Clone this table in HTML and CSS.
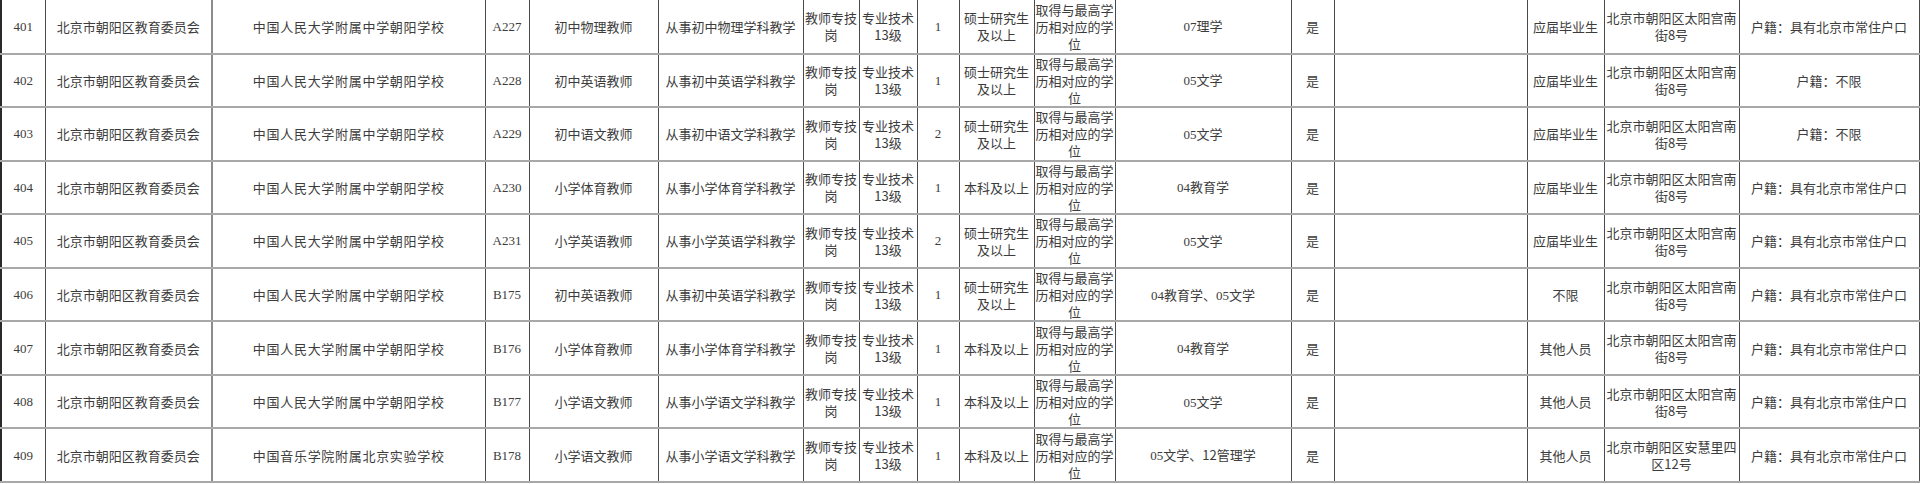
FILE: index.html
```html
<!DOCTYPE html>
<html lang="zh-CN">
<head>
<meta charset="utf-8">
<title>岗位表</title>
<link rel="stylesheet" href="styles.css">
</head>
<body>
<table class="jobs">
<colgroup>
<col class="c1"><col class="c2"><col class="c3"><col class="c4"><col class="c5"><col class="c6"><col class="c7"><col class="c8"><col class="c9"><col class="c10"><col class="c11"><col class="c12"><col class="c13"><col class="c14"><col class="c15"><col class="c16"><col class="c17">
</colgroup>
<tbody>
<tr><td class="num">401</td><td>北京市朝阳区教育委员会</td><td class="school">中国人民大学附属中学朝阳学校</td><td class="num">A227</td><td>初中物理教师</td><td>从事初中物理学科教学</td><td>教师专技岗</td><td>专业技术13级</td><td class="num">1</td><td>硕士研究生及以上</td><td>取得与最高学历相对应的学位</td><td><span class="num">07</span>理学</td><td>是</td><td></td><td>应届毕业生</td><td>北京市朝阳区太阳宫南街8号</td><td>户籍：具有北京市常住户口</td></tr>
<tr><td class="num">402</td><td>北京市朝阳区教育委员会</td><td class="school">中国人民大学附属中学朝阳学校</td><td class="num">A228</td><td>初中英语教师</td><td>从事初中英语学科教学</td><td>教师专技岗</td><td>专业技术13级</td><td class="num">1</td><td>硕士研究生及以上</td><td>取得与最高学历相对应的学位</td><td><span class="num">05</span>文学</td><td>是</td><td></td><td>应届毕业生</td><td>北京市朝阳区太阳宫南街8号</td><td>户籍：不限</td></tr>
<tr><td class="num">403</td><td>北京市朝阳区教育委员会</td><td class="school">中国人民大学附属中学朝阳学校</td><td class="num">A229</td><td>初中语文教师</td><td>从事初中语文学科教学</td><td>教师专技岗</td><td>专业技术13级</td><td class="num">2</td><td>硕士研究生及以上</td><td>取得与最高学历相对应的学位</td><td><span class="num">05</span>文学</td><td>是</td><td></td><td>应届毕业生</td><td>北京市朝阳区太阳宫南街8号</td><td>户籍：不限</td></tr>
<tr><td class="num">404</td><td>北京市朝阳区教育委员会</td><td class="school">中国人民大学附属中学朝阳学校</td><td class="num">A230</td><td>小学体育教师</td><td>从事小学体育学科教学</td><td>教师专技岗</td><td>专业技术13级</td><td class="num">1</td><td>本科及以上</td><td>取得与最高学历相对应的学位</td><td><span class="num">04</span>教育学</td><td>是</td><td></td><td>应届毕业生</td><td>北京市朝阳区太阳宫南街8号</td><td>户籍：具有北京市常住户口</td></tr>
<tr><td class="num">405</td><td>北京市朝阳区教育委员会</td><td class="school">中国人民大学附属中学朝阳学校</td><td class="num">A231</td><td>小学英语教师</td><td>从事小学英语学科教学</td><td>教师专技岗</td><td>专业技术13级</td><td class="num">2</td><td>硕士研究生及以上</td><td>取得与最高学历相对应的学位</td><td><span class="num">05</span>文学</td><td>是</td><td></td><td>应届毕业生</td><td>北京市朝阳区太阳宫南街8号</td><td>户籍：具有北京市常住户口</td></tr>
<tr><td class="num">406</td><td>北京市朝阳区教育委员会</td><td class="school">中国人民大学附属中学朝阳学校</td><td class="num">B175</td><td>初中英语教师</td><td>从事初中英语学科教学</td><td>教师专技岗</td><td>专业技术13级</td><td class="num">1</td><td>硕士研究生及以上</td><td>取得与最高学历相对应的学位</td><td><span class="num">04</span>教育学、<span class="num">05</span>文学</td><td>是</td><td></td><td>不限</td><td>北京市朝阳区太阳宫南街8号</td><td>户籍：具有北京市常住户口</td></tr>
<tr><td class="num">407</td><td>北京市朝阳区教育委员会</td><td class="school">中国人民大学附属中学朝阳学校</td><td class="num">B176</td><td>小学体育教师</td><td>从事小学体育学科教学</td><td>教师专技岗</td><td>专业技术13级</td><td class="num">1</td><td>本科及以上</td><td>取得与最高学历相对应的学位</td><td><span class="num">04</span>教育学</td><td>是</td><td></td><td>其他人员</td><td>北京市朝阳区太阳宫南街8号</td><td>户籍：具有北京市常住户口</td></tr>
<tr><td class="num">408</td><td>北京市朝阳区教育委员会</td><td class="school">中国人民大学附属中学朝阳学校</td><td class="num">B177</td><td>小学语文教师</td><td>从事小学语文学科教学</td><td>教师专技岗</td><td>专业技术13级</td><td class="num">1</td><td>本科及以上</td><td>取得与最高学历相对应的学位</td><td><span class="num">05</span>文学</td><td>是</td><td></td><td>其他人员</td><td>北京市朝阳区太阳宫南街8号</td><td>户籍：具有北京市常住户口</td></tr>
<tr><td class="num">409</td><td>北京市朝阳区教育委员会</td><td class="school">中国音乐学院附属北京实验学校</td><td class="num">B178</td><td>小学语文教师</td><td>从事小学语文学科教学</td><td>教师专技岗</td><td>专业技术13级</td><td class="num">1</td><td>本科及以上</td><td>取得与最高学历相对应的学位</td><td><span class="num">05</span>文学、12管理学</td><td>是</td><td></td><td>其他人员</td><td>北京市朝阳区安慧里四区12号</td><td>户籍：具有北京市常住户口</td></tr>
</tbody>
</table>
</body>
</html>
```

FILE: styles.css
```css
html, body {
  margin: 0;
  padding: 0;
  background: #ffffff;
}

.jobs {
  border-collapse: collapse;
  table-layout: fixed;
  width: 1918px;
  font-family: "Noto Sans CJK SC", "Liberation Sans", sans-serif;
  font-size: 13px;
  line-height: 17px;
  color: #3c3c3c;
}

.c1 { width: 44px; }
.c2 { width: 167px; }
.c3 { width: 273px; }
.c4 { width: 44px; }
.c5 { width: 129px; }
.c6 { width: 145px; }
.c7 { width: 56px; }
.c8 { width: 58px; }
.c9 { width: 42px; }
.c10 { width: 75px; }
.c11 { width: 81px; }
.c12 { width: 176px; }
.c13 { width: 43px; }
.c14 { width: 193px; }
.c15 { width: 77px; }
.c16 { width: 135px; }
.c17 { width: 180px; }

.jobs tr {
  height: 53.55px;
}

.jobs td {
  padding: 0 1px;
  text-align: center;
  vertical-align: middle;
  border-bottom: 2px solid #a8a8a8;
  border-right: 1px solid #4a4a4a;
  overflow: hidden;
}

.jobs td:first-child {
  border-left: 2px solid #2a2a2a;
}

.jobs td:nth-child(2) {
  border-right: 2px solid #8c8c8c;
}

.jobs td.school {
  letter-spacing: 0.7px;
}

.num {
  font-family: "Liberation Serif", "Noto Sans CJK SC", serif;
  font-size: 13px;
  color: #3c3c3c;
}
```
